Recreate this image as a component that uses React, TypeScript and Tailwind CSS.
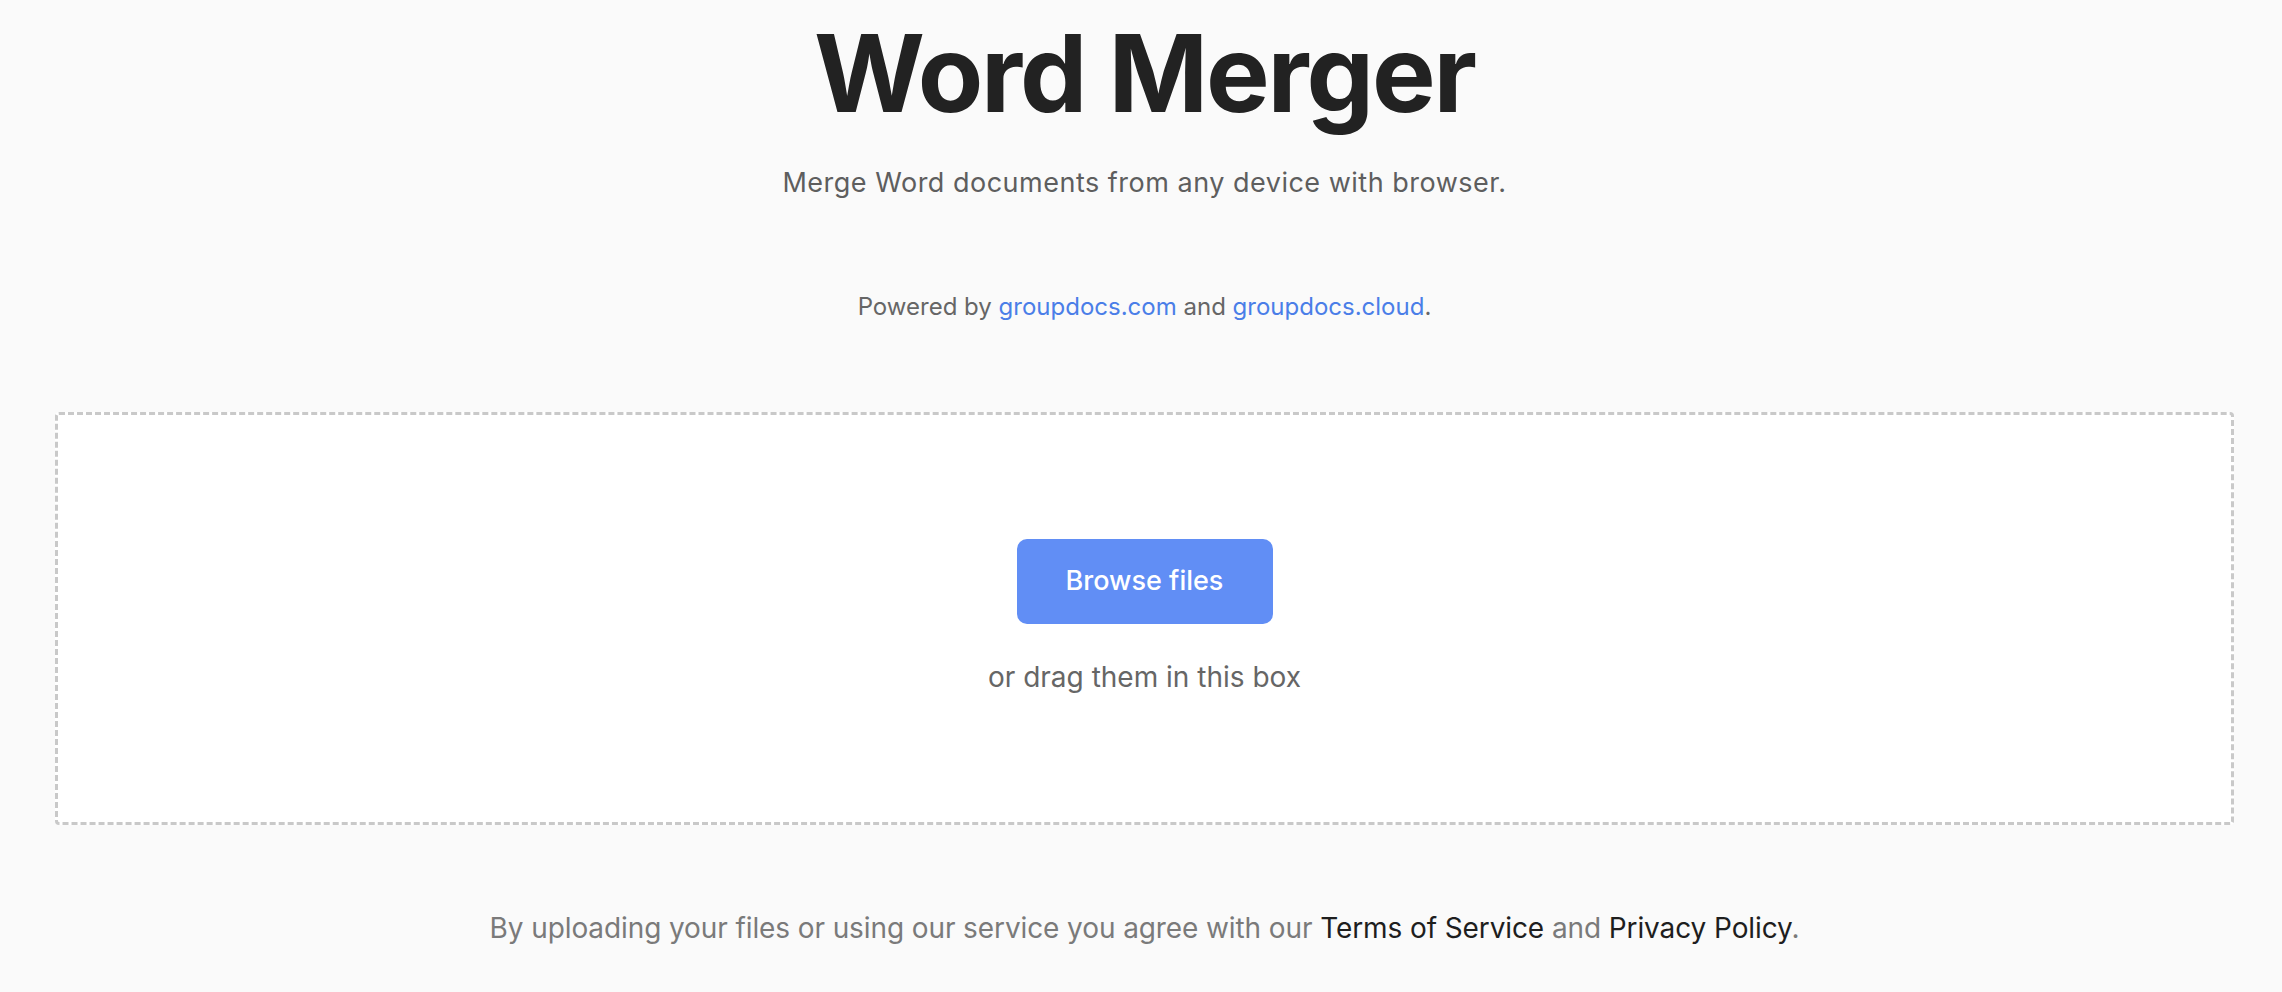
export default function App() {
  return (
    <div className="min-h-screen bg-[#fafafa] font-['Inter','Noto_Sans',sans-serif] text-[#222]">
      <div className="flex flex-col items-center pl-[55px] pr-[48px]">
        {/* ---------- Header ---------- */}
        <h1 className="mt-[20px] text-[107px] leading-none font-bold tracking-[-0.02em] text-[#222]">
          Word Merger
        </h1>
        <p className="mt-[39px] text-[27px] leading-[34px] tracking-[0.5px] text-[#5e5e5e]">
          Merge Word documents from any device with browser.
        </p>
        <p className="mt-[93px] text-[24px] leading-[28px] text-[#666]">
          Powered by{" "}
          <a href="#" className="text-[#4a7ee8]">
            groupdocs.com
          </a>{" "}
          and{" "}
          <a href="#" className="text-[#4a7ee8]">
            groupdocs.cloud
          </a>
          .
        </p>

        {/* ---------- Drop zone ---------- */}
        <div className="mt-[91px] flex h-[413px] w-full flex-col items-center justify-center rounded-[4px] border-[3px] border-dashed border-[#c9c9c9] bg-white pb-[3px]">
          <button className="h-[85px] w-[256px] rounded-[10px] bg-[#618ef5] text-[27px] font-medium text-white">
            Browse files
          </button>
          <p className="mt-[35px] text-[28px] leading-[36px] text-[#666]">
            or drag them in this box
          </p>
        </div>

        {/* ---------- Footer ---------- */}
        <p className="mt-[85px] text-[28px] leading-[36px] tracking-[-0.1px] text-[#7a7a7a]">
          By uploading your files or using our service you agree with our{" "}
          <a href="#" className="text-[#1e1e1e]">
            Terms of Service
          </a>{" "}
          and{" "}
          <a href="#" className="text-[#1e1e1e]">
            Privacy Policy
          </a>
          .
        </p>
      </div>
    </div>
  );
}
